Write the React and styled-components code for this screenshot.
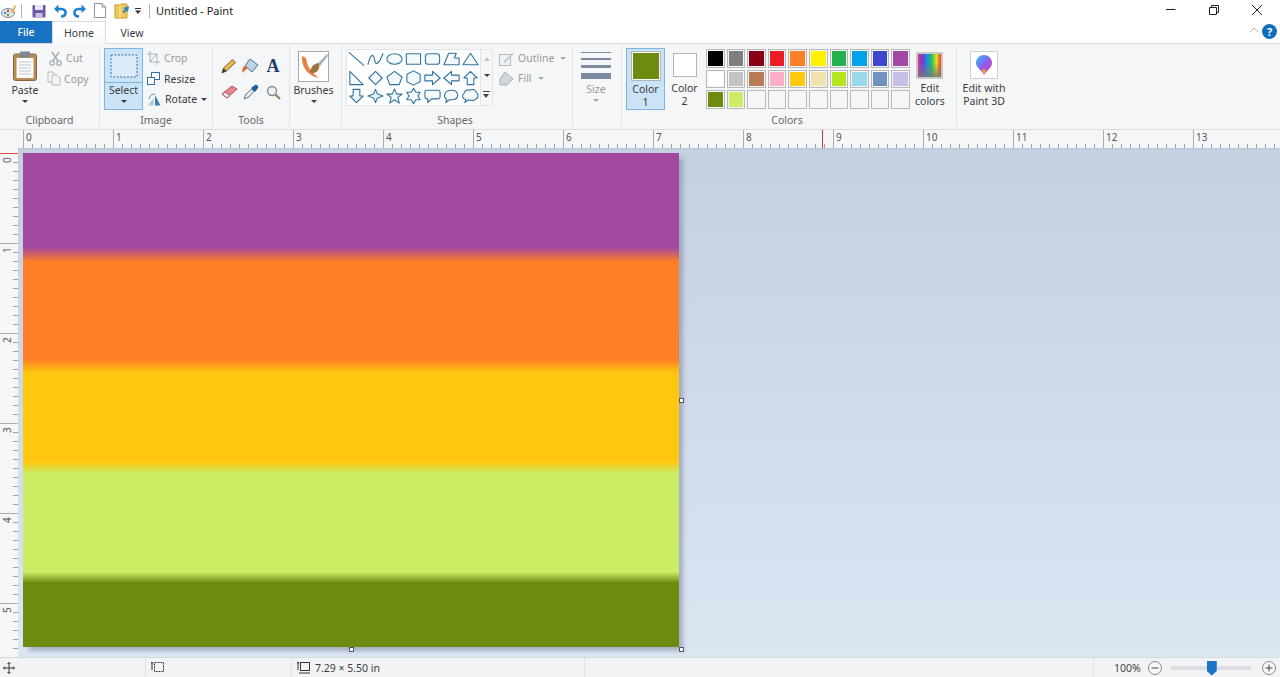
import styled, { createGlobalStyle } from "styled-components";

const GlobalStyle = createGlobalStyle`
  html, body {
    margin: 0;
    padding: 0;
    background: #fff;
    overflow: hidden;
  }
  * {
    box-sizing: border-box;
  }
`;

const Root = styled.div`
  width: 1280px;
  height: 677px;
  display: flex;
  flex-direction: column;
  overflow: hidden;
  font-family: "Noto Sans", "Open Sans", sans-serif;
  font-size: 10.5px;
  color: #3c3c3c;
`;

/* title bar */
const TitleBar = styled.div`
  height: 21px;
  display: flex;
  align-items: center;
  padding-left: 1px;
  background: #fff;
`;

const QuickIcon = styled.span`
  display: flex;
  width: ${(p) => p.$w || 14}px;
  margin-right: ${(p) => p.$mr || 0}px;
`;

const TitleRule = styled.span`
  width: 1px;
  height: 14px;
  background: #b4b4b4;
  margin-right: ${(p) => p.$mr}px;
`;

const TitleText = styled.span`
  font-size: 11px;
  color: #1c1c1c;
  flex: 1;
`;

const WinButton = styled.span`
  display: flex;
  width: 12px;
  margin-right: ${(p) => p.$mr}px;
  margin-bottom: 2px;
`;

/* tabs */
const TabRow = styled.div`
  height: 23px;
  display: flex;
  align-items: flex-start;
  background: #fff;
  border-bottom: 1px solid #dadbdc;
`;

const FileTab = styled.div`
  width: 52px;
  height: 22px;
  background: #1872c2;
  color: #fff;
  display: flex;
  align-items: center;
  justify-content: center;
  font-weight: 500;
`;

const Tab = styled.div`
  width: 54px;
  height: 23px;
  display: flex;
  align-items: center;
  justify-content: center;
  color: #3c3c3c;
  margin-left: ${(p) => p.$ml || 0}px;
  ${(p) =>
    p.$active &&
    `
    border: 1px solid #dadbdc;
    border-bottom: none;
    background: linear-gradient(#fff, #f8f9fa);
  `}
`;

const TabSpace = styled.div`
  flex: 1;
`;

const Collapse = styled.span`
  display: flex;
  width: 10px;
  margin: 6px 3px 0 0;
`;

const Help = styled.span`
  width: 15px;
  height: 15px;
  margin: 3px 3px 0 0;
  border-radius: 50%;
  background: #0f6cbd;
  color: #fff;
  font-size: 11px;
  font-weight: 700;
  line-height: 15px;
  text-align: center;
`;

/* ribbon */
const Ribbon = styled.div`
  height: 86px;
  display: flex;
  background: #f5f6f7;
  border-bottom: 1px solid #dadbdc;
`;

const Group = styled.div`
  width: ${(p) => p.$w}px;
  margin: 2px 0 2px;
  display: flex;
  flex-direction: column;
  border-right: 1px solid ${(p) => (p.$plain ? "transparent" : "#e3e4e6")};
`;

const GroupBody = styled.div`
  height: 66px;
  display: flex;
  padding-top: 2px;
  padding-left: ${(p) => p.$pl || 0}px;
`;

const GroupLabel = styled.div`
  flex: 1;
  text-align: center;
  line-height: 14px;
  padding-top: 1px;
  padding-right: ${(p) => p.$pr || 0}px;
  color: #666;
`;

const BigButton = styled.div`
  width: ${(p) => p.$w}px;
  margin-left: ${(p) => p.$ml || 0}px;
  height: 62px;
  display: flex;
  flex-direction: column;
  align-items: center;
  text-align: center;
  line-height: 13px;
  color: ${(p) => (p.$off ? "#9a9a9a" : "#3c3c3c")};
  ${(p) =>
    p.$on &&
    `
    background: #cbe3f6;
    border: 1px solid #7fb4de;
  `}
`;

const BigIcon = styled.div`
  height: ${(p) => p.$h || 35}px;
  flex-shrink: 0;
  display: flex;
  align-items: center;
  justify-content: center;
  align-self: stretch;
  ${(p) => p.$split && "border-bottom: 1px solid #7fb4de; margin-bottom: 1px;"}
`;

const Caret = styled.span`
  width: 0;
  height: 0;
  margin: ${(p) => p.$m || "3px 0 0"};
  border-left: 3px solid transparent;
  border-right: 3px solid transparent;
  border-top: 3px solid ${(p) => (p.$off ? "#a8a8a8" : "#3c3c3c")};
  display: inline-block;
`;

const SmallColumn = styled.div`
  display: flex;
  flex-direction: column;
  margin-left: ${(p) => p.$ml || 0}px;
`;

const SmallButton = styled.div`
  height: ${(p) => p.$h || 20.5}px;
  display: flex;
  align-items: center;
  gap: ${(p) => p.$gap || 4}px;
  margin-left: ${(p) => p.$ml || 0}px;
  color: ${(p) => (p.$off ? "#9a9a9a" : "#3c3c3c")};
`;

const ToolGrid = styled.div`
  display: grid;
  grid-template-columns: repeat(3, 22px);
  grid-template-rows: 26px 26px;
  margin: 5px 0 0 5px;
  place-items: center;
`;

const TextTool = styled.span`
  font-family: "Liberation Serif", serif;
  font-weight: 700;
  font-size: 18px;
  line-height: 18px;
  color: #1f3f6b;
`;

const ShapeBox = styled.div`
  width: 147px;
  height: 57px;
  margin: 1px 0 0 4px;
  display: flex;
  background: #fff;
  border: 1px solid #e2e4e7;
`;

const ShapeGrid = styled.div`
  width: 133px;
  display: grid;
  grid-template-columns: repeat(7, 19px);
  grid-template-rows: repeat(3, 18.4px);
  place-items: center;
`;

const ShapeScroll = styled.div`
  flex: 1;
  background: #f5f6f7;
  border-left: 1px solid #e2e4e7;
  display: flex;
  flex-direction: column;
  align-items: center;
  justify-content: space-around;
`;

const ScrollUp = styled.span`
  width: 0;
  height: 0;
  border-left: 3px solid transparent;
  border-right: 3px solid transparent;
  border-bottom: 4px solid #c4c4c4;
`;

const ScrollMore = styled.span`
  width: 7px;
  height: 7px;
  border-top: 1px solid #444;
  position: relative;
  &::after {
    content: "";
    position: absolute;
    left: 0;
    top: 2px;
    border-left: 3.5px solid transparent;
    border-right: 3.5px solid transparent;
    border-top: 4px solid #444;
  }
`;

const SizeLines = styled.div`
  width: 30px;
  height: 38px;
  display: flex;
  flex-direction: column;
  justify-content: center;
  gap: 5px;
`;

const SizeLine = styled.span`
  height: ${(p) => p.$h}px;
  background: ${(p) => p.$c};
`;

const ColorSwatch = styled.span`
  display: block;
  width: ${(p) => p.$s}px;
  height: ${(p) => p.$s}px;
  background: ${(p) => p.$c};
  border: 1px solid #fff;
  outline: 1px solid #b4b4b4;
`;

const Palette = styled.div`
  display: grid;
  grid-template-columns: repeat(10, 18.6px);
  grid-template-rows: repeat(3, 18.6px);
  gap: 2px;
  margin: 1px 0 0 2px;
`;

const PaletteCell = styled.span`
  background: ${(p) => p.$c || "#f5f6f7"};
  border: 2px solid #f5f6f7;
  outline: 1px solid #b9b9b9;
  outline-offset: -1px;
`;

const RainbowBox = styled.span`
  width: 27px;
  height: 27px;
  border: 2px solid #c9c9c9;
  background:
    linear-gradient(transparent 40%, rgba(120, 120, 120, 0.85)),
    linear-gradient(90deg, #e8348a, #6a3fd0 20%, #1f8de0 40%, #22c55e 60%, #e6e01f 80%, #f03c1f);
`;

const AppBox = styled.span`
  width: 28px;
  height: 28px;
  background: #fff;
  border: 1px solid #d0d0d0;
  display: flex;
  align-items: center;
  justify-content: center;
`;

/* rulers */
const TopRuler = styled.div`
  height: 18px;
  flex-shrink: 0;
  display: flex;
  padding-left: 23px;
  background: #f5f6f7;
  position: relative;
  overflow: hidden;
`;

const InchTop = styled.div`
  width: 90px;
  flex-shrink: 0;
  border-left: 1px solid #a9aeb5;
  padding-left: 2px;
  font-size: 10px;
  line-height: 14px;
  color: #555;
  background: repeating-linear-gradient(90deg, transparent 0 8px, #9da2a9 8px 9px) left bottom / 100% 4px no-repeat;
`;

const MarkTop = styled.span`
  position: absolute;
  left: 822px;
  top: 0;
  width: 1px;
  height: 18px;
  background: #d0344a;
`;

const Main = styled.div`
  flex: 1;
  min-height: 0;
  display: flex;
`;

const LeftRuler = styled.div`
  width: 18px;
  flex-shrink: 0;
  background: #f5f6f7;
  padding-top: 5px;
  position: relative;
  overflow: hidden;
`;

const InchLeft = styled.div`
  height: 90px;
  border-top: 1px solid #a9aeb5;
  font-size: 10px;
  color: #555;
  display: flex;
  background: repeating-linear-gradient(180deg, transparent 0 8px, #9da2a9 8px 9px) right top / 5px 100% no-repeat;
`;

const InchLeftNum = styled.span`
  writing-mode: vertical-rl;
  transform: rotate(180deg);
  line-height: 14px;
  height: 8px;
  margin-top: 1px;
`;

const MarkLeft = styled.span`
  position: absolute;
  left: 0;
  top: 5px;
  width: 18px;
  height: 1px;
  background: #e0443e;
`;

const Workspace = styled.div`
  flex: 1;
  padding: 5px;
  background: linear-gradient(#c5cfe0, #dce5f2);
  border-top: 1px solid #b9c2d1;
`;

const Canvas = styled.div`
  width: 656px;
  height: 494px;
  margin-top: -1px;
  position: relative;
  box-shadow: 5px 5px 4px -1px rgba(120, 135, 165, 0.55);
  background: linear-gradient(
    #a1489f 0,
    #a1489f 94px,
    #ff7f27 109px,
    #ff7f27 206px,
    #ffc70f 220px,
    #ffc70f 309px,
    #cbec63 320px,
    #cbec63 419px,
    #6e8a10 430px,
    #6e8a10 100%
  );
`;

const Handle = styled.span`
  position: absolute;
  left: ${(p) => p.$x}px;
  top: ${(p) => p.$y}px;
  width: 5px;
  height: 5px;
  background: #fff;
  border: 1px solid #555;
`;

/* status bar */
const StatusBar = styled.div`
  height: 20px;
  flex-shrink: 0;
  display: flex;
  align-items: center;
  background: #f2f3f5;
  border-top: 1px solid #d6d9de;
`;

const StatusCell = styled.div`
  width: ${(p) => p.$w}px;
  height: 100%;
  display: flex;
  align-items: center;
  gap: 5px;
  padding-left: ${(p) => p.$pl || 3}px;
  border-right: 1px solid #e0e2e5;
`;

const ZoomArea = styled.div`
  flex: 1;
  display: flex;
  align-items: center;
  padding-left: 20px;
  color: #444;
`;

const ZoomCircle = styled.span`
  width: 14px;
  height: 14px;
  flex-shrink: 0;
  display: flex;
  margin: ${(p) => p.$m};
`;

const ZoomTrack = styled.div`
  width: 80px;
  height: 4px;
  background: #dcdee1;
  position: relative;
`;

const ZoomThumb = styled.span`
  position: absolute;
  left: 36px;
  top: -5px;
  width: 10px;
  height: 15px;
  background: #1a73c8;
  clip-path: polygon(0 0, 100% 0, 100% 70%, 50% 100%, 0 70%);
`;

/* icons */
const Svg = ({ w, h, children }) => (
  <svg width={w} height={h} viewBox={`0 0 ${w} ${h}`} fill="none">
    {children}
  </svg>
);

const ShapeSvg = ({ children }) => (
  <svg width="19" height="18" viewBox="0 0 20 18" fill="#f4f9fd" stroke="#2f739f" strokeWidth="1.15" strokeLinejoin="round">
    {children}
  </svg>
);

const shapes = [
  <path key="line" d="M2 2L18 16" fill="none" />,
  <path key="curve" d="M2 15C5 3 8 3 9 10S14 14 18 3" fill="none" />,
  <ellipse key="oval" cx="10" cy="9" rx="8" ry="5.5" />,
  <rect key="rect" x="2.5" y="3.5" width="15" height="11" />,
  <rect key="round" x="2.5" y="3.5" width="15" height="11" rx="3" />,
  <path key="poly" d="M2 15L7 3H15L13 8H18V15Z" />,
  <path key="tri" d="M10 3L18 15H2Z" />,
  <path key="rtri" d="M3 2L17 16H3Z" />,
  <path key="diamond" d="M10 2L17 9L10 16L3 9Z" />,
  <path key="pent" d="M10 2L18 8L15 16H5L2 8Z" />,
  <path key="hex" d="M10 1.5L17 5V13L10 16.5L3 13V5Z" />,
  <path key="right" d="M2 6H10V2L18 9L10 16V12H2Z" />,
  <path key="left" d="M18 6H10V2L2 9L10 16V12H18Z" />,
  <path key="up" d="M10 2L17 9H13.5V16H6.5V9H3Z" />,
  <path key="down" d="M10 16L17 9H13.5V2H6.5V9H3Z" />,
  <path key="star4" d="M10 2L12 7L18 9L12 11L10 16L8 11L2 9L8 7Z" />,
  <path key="star5" d="M10 1.5L12.3 7H18L13.5 10.5L15 16.5L10 13L5 16.5L6.5 10.5L2 7H7.7Z" />,
  <path key="star6" d="M10 1L12.5 5H17L14.8 9L17 13H12.5L10 17L7.5 13H3L5.2 9L3 5H7.5Z" />,
  <path key="callout" d="M4 3H16Q18 3 18 5V10Q18 12 16 12H9L5 16V12H4Q2 12 2 10V5Q2 3 4 3Z" />,
  <path key="talk" d="M5 13C1 10 2 3 10 3C18 3 19 12 11 13H8L4 16Z" />,
  <path key="cloud" d="M5 13C1 12 1 8 3 7C3 3 7 2 9 3C12 1 16 3 16 5C19 7 18 11 16 12C14 14 10 14 8 13L4 16Z" />,
];

const swatches = [
  "#000000", "#7f7f7f", "#880015", "#ed1c24", "#ff7f27", "#fff200", "#22b14c", "#00a2e8", "#3f48cc", "#a349a4",
  "#ffffff", "#c3c3c3", "#b97a57", "#ffaec9", "#ffc90e", "#efe4b0", "#b5e61d", "#99d9ea", "#7092be", "#c8bfe7",
  "#6e8a10", "#cbec63", null, null, null, null, null, null, null, null,
];

const inchesTop = Array.from({ length: 14 }, (_, i) => i);
const inchesLeft = [0, 1, 2, 3, 4, 5];

function App() {
  return (
    <Root>
      <GlobalStyle />
      <TitleBar>
        <QuickIcon $w={16} $mr={4}>
          <Svg w={16} h={16}>
            <ellipse cx="7" cy="10" rx="6.5" ry="4.5" fill="#dfe5ea" stroke="#7d8a96" />
            <circle cx="4" cy="10" r="1.2" fill="#3d8fd1" />
            <circle cx="7" cy="8" r="1.2" fill="#e0493a" />
            <circle cx="7" cy="12" r="1.2" fill="#59a84a" />
            <path d="M10 9L14 2L15 3L12 10Z" fill="#e3a53b" />
          </Svg>
        </QuickIcon>
        <TitleRule $mr={10} />
        <QuickIcon $mr={7}>
          <Svg w={14} h={14}>
            <rect x="0.5" y="1" width="13" height="12.5" rx="1" fill="#6c58a6" />
            <rect x="3" y="1" width="8" height="5" fill="#e7e5f2" />
            <rect x="3.5" y="9" width="7" height="4.5" fill="#c9c4de" />
          </Svg>
        </QuickIcon>
        <QuickIcon $mr={6}>
          <Svg w={14} h={14}>
            <path d="M3 5H8.5C14 5 14 12.5 8 12.5" stroke="#1f7fd6" strokeWidth="2.6" />
            <path d="M5.5 0.5V9L1 5Z" fill="#1f7fd6" />
          </Svg>
        </QuickIcon>
        <QuickIcon $mr={6}>
          <Svg w={14} h={14}>
            <path d="M11 5H5.5C0 5 0 12.5 6 12.5" stroke="#1f7fd6" strokeWidth="2.6" />
            <path d="M8.5 0.5V9L13 5Z" fill="#1f7fd6" />
          </Svg>
        </QuickIcon>
        <QuickIcon $mr={7}>
          <Svg w={14} h={15}>
            <path d="M1.5 0.5H9L12.5 4V14.5H1.5Z" fill="#fff" stroke="#8f9499" />
            <path d="M9 0.5V4H12.5" stroke="#8f9499" />
          </Svg>
        </QuickIcon>
        <QuickIcon $w={16} $mr={4}>
          <Svg w={16} h={16}>
            <path d="M1 2H6V1H13V15H1Z" fill="#f0c95c" stroke="#c79a2c" />
            <path d="M6 1V15" stroke="#fbe9a6" />
            <path d="M15 3L9 5L11 6.5L8 9L10 10L12.5 7.5L14 9Z" fill="#2f80c9" />
          </Svg>
        </QuickIcon>
        <QuickIcon $w={8} $mr={7}>
          <Svg w={8} h={8}>
            <path d="M1 1.5H7" stroke="#333" />
            <path d="M1 3.5H7L4 7Z" fill="#333" />
          </Svg>
        </QuickIcon>
        <TitleRule $mr={6} />
        <TitleText>Untitled - Paint</TitleText>
        <WinButton $mr={31}>
          <Svg w={12} h={12}>
            <path d="M1 5.5H10.5" stroke="#222" />
          </Svg>
        </WinButton>
        <WinButton $mr={31}>
          <Svg w={12} h={12}>
            <path d="M1.5 3.5H8.5V10.5H1.5Z" stroke="#222" />
            <path d="M3.5 3.5V1.5H10.5V8.5H8.5" stroke="#222" />
          </Svg>
        </WinButton>
        <WinButton $mr={17}>
          <Svg w={12} h={12}>
            <path d="M1 1L11 11M11 1L1 11" stroke="#222" />
          </Svg>
        </WinButton>
      </TitleBar>

      <TabRow>
        <FileTab>File</FileTab>
        <Tab $active>Home</Tab>
        <Tab $ml={-1}>View</Tab>
        <TabSpace />
        <Collapse>
          <Svg w={10} h={6}>
            <path d="M1 5L5 1L9 5" stroke="#b9b9b9" />
          </Svg>
        </Collapse>
        <Help>?</Help>
      </TabRow>

      <Ribbon>
        <Group $w={100}>
          <GroupBody>
            <BigButton $w={48} $ml={1}>
              <BigIcon $h={36}>
                <Svg w={24} h={30}>
                  <rect x="0.5" y="3" width="23" height="26.5" rx="2" fill="#b98a5a" stroke="#8c6538" />
                  <rect x="3.5" y="7" width="17" height="20" fill="#fbfbfb" />
                  <path d="M6 11H18M6 14H18M6 17H18M6 20H18M6 23H18" stroke="#bfc4c9" />
                  <rect x="7" y="0.5" width="10" height="6" rx="1" fill="#7d8791" />
                </Svg>
              </BigIcon>
              Paste
              <Caret />
            </BigButton>
            <SmallColumn>
              <SmallButton $off>
                <Svg w={13} h={15}>
                  <path d="M3 1L9 10M10 1L4 10" stroke="#a9aeb4" strokeWidth="1.5" />
                  <circle cx="3" cy="12" r="2.2" stroke="#a9aeb4" strokeWidth="1.3" />
                  <circle cx="10" cy="12" r="2.2" stroke="#a9aeb4" strokeWidth="1.3" />
                </Svg>
                Cut
              </SmallButton>
              <SmallButton $off $gap={3} $ml={-2}>
                <Svg w={14} h={15}>
                  <path d="M1 1H6L8 3V11H1Z" fill="#f3f4f5" stroke="#b4bac0" />
                  <path d="M5 4H10L13 7V14H5Z" fill="#f3f4f5" stroke="#b4bac0" />
                </Svg>
                Copy
              </SmallButton>
            </SmallColumn>
          </GroupBody>
          <GroupLabel>Clipboard</GroupLabel>
        </Group>

        <Group $w={113}>
          <GroupBody>
            <BigButton $w={39} $ml={4} $on>
              <BigIcon $split $h={34}>
                <Svg w={28} h={24}>
                  <rect x="1" y="1" width="26" height="22" fill="#dcebf8" stroke="#3f6f9f" strokeDasharray="2 1.5" />
                </Svg>
              </BigIcon>
              Select
              <Caret />
            </BigButton>
            <SmallColumn $ml={4}>
              <SmallButton $off>
                <Svg w={13} h={14}>
                  <path d="M3 0V11H13M0 3H10V14M3 11L10 3" stroke="#a9b2ba" />
                </Svg>
                Crop
              </SmallButton>
              <SmallButton>
                <Svg w={13} h={13}>
                  <rect x="4.5" y="0.5" width="8" height="7" fill="#fff" stroke="#2f739f" />
                  <rect x="0.5" y="5.5" width="7" height="7" fill="#fff" stroke="#2f739f" />
                </Svg>
                Resize
              </SmallButton>
              <SmallButton>
                <Svg w={14} h={13}>
                  <path d="M8 2L13.5 12.5H8Z" fill="#3a7fb0" />
                  <path d="M6.5 5L1 12.5H6.5Z" fill="#b6c5d2" />
                  <path d="M2 6C3 2 6 1 8 1" stroke="#3a7fb0" />
                </Svg>
                Rotate
                <Caret $m="1px 0 0 0" />
              </SmallButton>
            </SmallColumn>
          </GroupBody>
          <GroupLabel>Image</GroupLabel>
        </Group>

        <Group $w={77}>
          <GroupBody>
            <ToolGrid>
              <Svg w={16} h={16}>
                <path d="M1 15L2.5 10L11.5 1.5L14.5 4.5L5.5 13Z" fill="#e6b64d" stroke="#7b6a3d" />
                <path d="M1 15L2.5 10L5.5 13Z" fill="#3c3c3c" />
              </Svg>
              <Svg w={18} h={16}>
                <path d="M8 1L16 7L10 14L3 8Z" fill="#bcd4e8" stroke="#44739a" />
                <path d="M3 8C0 9 0 13 1 15C2 13 4 11 6 10" fill="#e8642c" />
              </Svg>
              <TextTool>A</TextTool>
              <Svg w={17} h={14}>
                <path d="M1 9L11 1L16 4L6 13Z" fill="#e8848c" stroke="#b0555e" />
                <path d="M1 9L6 13L9 10.5L4 7Z" fill="#efefef" stroke="#b0555e" />
              </Svg>
              <Svg w={16} h={16}>
                <path d="M1 15L3 10L9 5L11 7L6 13Z" fill="#e8eef3" stroke="#6b7785" />
                <path d="M8 4L12 1C14 0 16 2 15 4L12 8Z" fill="#1f5f9c" />
              </Svg>
              <Svg w={15} h={15}>
                <circle cx="6" cy="6" r="4.5" fill="#e9f1f7" stroke="#7c8894" strokeWidth="1.3" />
                <path d="M9.5 9.5L14 14" stroke="#9a7a52" strokeWidth="2" />
              </Svg>
            </ToolGrid>
          </GroupBody>
          <GroupLabel>Tools</GroupLabel>
        </Group>

        <Group $w={52}>
          <GroupBody>
            <BigButton $w={47}>
              <BigIcon $h={36}>
                <Svg w={31} h={31}>
                  <rect x="0.5" y="0.5" width="30" height="30" fill="#fff" stroke="#a8a8a8" />
                  <path d="M4 5C3 16 10 25 21 27C13 21 9 15 8 7Z" fill="#e8804a" />
                  <path d="M12 21C13 14 18 12 21 12C23 17 18 25 12 21Z" fill="#9c7442" />
                  <path d="M20 12L29 3L30 5L22 15Z" fill="#aab4be" />
                </Svg>
              </BigIcon>
              Brushes
              <Caret />
            </BigButton>
          </GroupBody>
          <GroupLabel />
        </Group>

        <Group $w={231}>
          <GroupBody>
            <ShapeBox>
              <ShapeGrid>
                {shapes.map((shape) => (
                  <ShapeSvg key={shape.key}>{shape}</ShapeSvg>
                ))}
              </ShapeGrid>
              <ShapeScroll>
                <ScrollUp />
                <Caret $m="0" />
                <ScrollMore />
              </ShapeScroll>
            </ShapeBox>
            <SmallColumn $ml={6}>
              <SmallButton $off $gap={4} $h={20}>
                <Svg w={15} h={15}>
                  <rect x="0.5" y="3.5" width="11" height="11" fill="#f1f2f4" stroke="#b4bac0" />
                  <path d="M4 11L13 2L15 3L6 12Z" fill="#c3c9cf" />
                </Svg>
                Outline
                <Caret $off $m="1px 0 0 2px" />
              </SmallButton>
              <SmallButton $off $gap={4} $h={20}>
                <Svg w={15} h={15}>
                  <path d="M6 1L14 8L8 14H1L1 8Z" fill="#cfd5dc" stroke="#aab1b9" />
                </Svg>
                Fill
                <Caret $off $m="1px 0 0 2px" />
              </SmallButton>
            </SmallColumn>
          </GroupBody>
          <GroupLabel $pr={4}>Shapes</GroupLabel>
        </Group>

        <Group $w={49}>
          <GroupBody>
            <BigButton $w={46} $off>
              <BigIcon $h={35}>
                <SizeLines>
                  <SizeLine $h={1} $c="#7d8ca3" />
                  <SizeLine $h={2} $c="#7d8ca3" />
                  <SizeLine $h={3} $c="#7d8ca3" />
                  <SizeLine $h={6} $c="#7d8ca3" />
                </SizeLines>
              </BigIcon>
              Size
              <Caret $off />
            </BigButton>
          </GroupBody>
          <GroupLabel />
        </Group>

        <Group $w={335}>
          <GroupBody>
            <BigButton $w={39} $ml={4} $on>
              <BigIcon $h={34}>
                <ColorSwatch $s={28} $c="#6e8a10" />
              </BigIcon>
              Color
              <br />1
            </BigButton>
            <BigButton $w={39}>
              <BigIcon $h={34}>
                <ColorSwatch $s={22} $c="#fff" />
              </BigIcon>
              Color
              <br />2
            </BigButton>
            <Palette>
              {swatches.map((c, i) => (
                <PaletteCell key={i} $c={c} />
              ))}
            </Palette>
            <BigButton $w={40}>
              <BigIcon $h={34}>
                <RainbowBox />
              </BigIcon>
              Edit
              <br />
              colors
            </BigButton>
          </GroupBody>
          <GroupLabel $pr={4}>Colors</GroupLabel>
        </Group>

        <Group $w={56} $plain>
          <GroupBody>
            <BigButton $w={54}>
              <BigIcon $h={34}>
                <AppBox>
                  <Svg w={18} h={22}>
                    <defs>
                      <linearGradient id="drop3d" x1="0" y1="0" x2="1" y2="1">
                        <stop offset="0" stopColor="#2fc6e8" />
                        <stop offset="0.5" stopColor="#8b5cf0" />
                        <stop offset="1" stopColor="#f2457f" />
                      </linearGradient>
                    </defs>
                    <path d="M9 1C14 1 17 5 17 9C17 14 12 16 9 21C8 17 1 14 1 9C1 5 4 1 9 1Z" fill="url(#drop3d)" />
                    <path d="M9 21L7 15L11 16Z" fill="#f5a623" />
                  </Svg>
                </AppBox>
              </BigIcon>
              Edit with
              <br />
              Paint 3D
            </BigButton>
          </GroupBody>
          <GroupLabel />
        </Group>
      </Ribbon>

      <TopRuler>
        {inchesTop.map((n) => (
          <InchTop key={n}>{n}</InchTop>
        ))}
        <MarkTop />
      </TopRuler>

      <Main>
        <LeftRuler>
          {inchesLeft.map((n) => (
            <InchLeft key={n}>
              <InchLeftNum>{n}</InchLeftNum>
            </InchLeft>
          ))}
          <MarkLeft />
        </LeftRuler>
        <Workspace>
          <Canvas>
            <Handle $x={656} $y={245} />
            <Handle $x={326} $y={494} />
            <Handle $x={656} $y={494} />
          </Canvas>
        </Workspace>
      </Main>

      <StatusBar>
        <StatusCell $w={146}>
          <Svg w={12} h={12}>
            <path d="M6 0.5V11.5M0.5 6H11.5M4.5 2L6 0.5L7.5 2M4.5 10L6 11.5L7.5 10M2 4.5L0.5 6L2 7.5M10 4.5L11.5 6L10 7.5" stroke="#333" />
          </Svg>
        </StatusCell>
        <StatusCell $w={146} $pl={5}>
          <Svg w={13} h={13}>
            <path d="M1 1V9M0 2.5L1 1L2 2.5" stroke="#333" />
            <rect x="3.5" y="1.5" width="9" height="9" stroke="#333" strokeDasharray="2 1" />
          </Svg>
        </StatusCell>
        <StatusCell $w={293} $pl={5}>
          <Svg w={13} h={13}>
            <path d="M1 1V9M0 2.5L1 1L2 2.5" stroke="#333" />
            <rect x="3.5" y="1.5" width="9" height="8" stroke="#333" />
            <path d="M2 12H13" stroke="#333" />
          </Svg>
          7.29 × 5.50 in
        </StatusCell>
        <StatusCell $w={509} />
        <ZoomArea>
          100%
          <ZoomCircle $m="0 9px 0 7px">
            <Svg w={14} h={14}>
              <circle cx="7" cy="7" r="6.5" fill="#f7f8f9" stroke="#8a8a8a" />
              <path d="M3.5 7H10.5" stroke="#444" />
            </Svg>
          </ZoomCircle>
          <ZoomTrack>
            <ZoomThumb />
          </ZoomTrack>
          <ZoomCircle $m="0 0 0 11px">
            <Svg w={14} h={14}>
              <circle cx="7" cy="7" r="6.5" fill="#f7f8f9" stroke="#8a8a8a" />
              <path d="M3.5 7H10.5M7 3.5V10.5" stroke="#444" />
            </Svg>
          </ZoomCircle>
        </ZoomArea>
      </StatusBar>
    </Root>
  );
}

export default App;
